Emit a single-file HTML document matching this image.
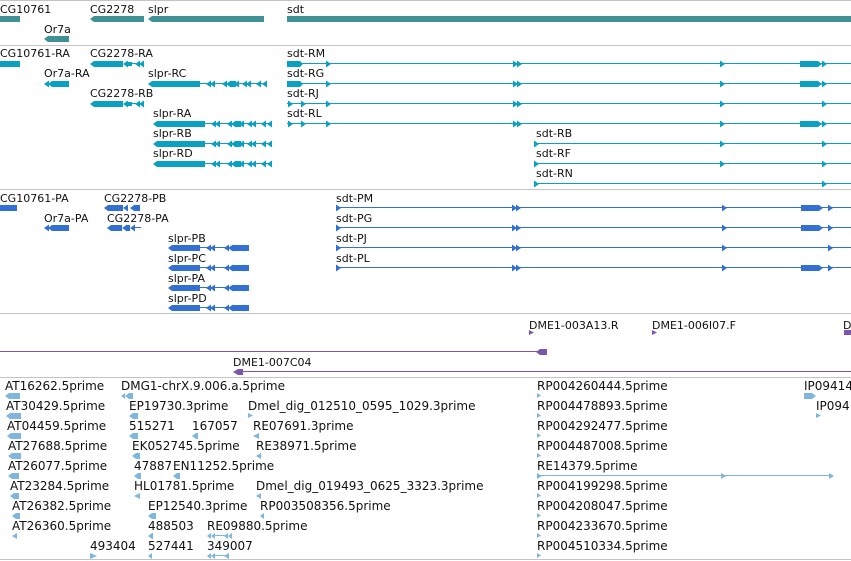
<!DOCTYPE html>
<html><head><meta charset="utf-8"><style>
html,body{margin:0;padding:0;background:#fff;width:851px;height:561px;overflow:hidden}
svg{display:block}
rect{shape-rendering:crispEdges}
text{font-family:"DejaVu Sans","Liberation Sans",sans-serif;font-size:11px;fill:#111}
.b text{font-size:12px}
</style></head><body>
<svg width="851" height="561" viewBox="0 0 851 561" xmlns="http://www.w3.org/2000/svg">
<defs>
<g id="slT"><polygon points="0,0 4,-3 52,-3 52,3 4,3"/><rect x="52" y="-1" width="67" height="1"/>
<polygon points="58,0 63,-3.5 63,3.5"/><polygon points="62,0 67,-3.5 67,3.5"/>
<polygon points="74,0 79,-3.5 79,3.5"/><polygon points="78,0 83,-3.5 83,3.5"/><rect x="82" y="-3" width="6" height="6"/><polygon points="86,0 91,-3.5 91,3.5"/>
<polygon points="94,0 99,-3.5 99,3.5"/><polygon points="98,0 103,-3.5 103,3.5"/><polygon points="108,0 113,-3.5 113,3.5"/><polygon points="114,0 119,-3.5 119,3.5"/></g>
<g id="slP"><polygon points="0,0 4,-3 32,-3 32,3 4,3"/><rect x="32" y="-1" width="49" height="1"/>
<polygon points="38,0 43,-3.5 43,3.5"/><polygon points="42,0 47,-3.5 47,3.5"/>
<polygon points="56,0 61,-3.5 61,3.5"/><polygon points="60,0 65,-3.5 65,3.5"/><rect x="64" y="-3" width="12" height="6"/><polygon points="72,0 77,-3.5 77,3.5"/><rect x="76" y="-3" width="5" height="6"/></g>
<g id="cgT"><polygon points="0,0 4,-3 33,-3 33,3 4,3"/><polygon points="33,0 38,-3.5 38,3.5"/><rect x="37" y="-2" width="5" height="4"/><rect x="38" y="-1" width="8" height="1"/><polygon points="45,0 50,-3.5 50,3.5"/><polygon points="49,0 54,-3.5 54,3.5"/></g>
<g id="ra"><polygon points="0,-3.5 5,0 0,3.5"/></g>
</defs>

<g fill="#c4c4c4"><rect x="0" y="0" width="851" height="1"/><rect x="0" y="45" width="851" height="1"/><rect x="0" y="189" width="851" height="1"/><rect x="0" y="313" width="851" height="1"/><rect x="0" y="377" width="851" height="1"/><rect x="0" y="559" width="851" height="1"/></g>

<text x="0" y="13">CG10761</text><text x="90" y="13">CG2278</text><text x="148" y="13">slpr</text><text x="287" y="13">sdt</text><text x="44" y="33">Or7a</text>
<g fill="#3f9196">
<rect x="0" y="16" width="20" height="6"/>
<polygon points="90,19 94,16 144,16 144,22 94,22"/>
<polygon points="148,19 152,16 264,16 264,22 152,22"/>
<rect x="287" y="16" width="564" height="6"/>
<polygon points="44,39 48,36 69,36 69,42 48,42"/>
</g>

<text x="0" y="57">CG10761-RA</text><text x="90" y="57">CG2278-RA</text><text x="44" y="77">Or7a-RA</text><text x="148" y="77">slpr-RC</text>
<text x="90" y="97">CG2278-RB</text><text x="153" y="117">slpr-RA</text><text x="153" y="137">slpr-RB</text><text x="153" y="157">slpr-RD</text>
<text x="287" y="57">sdt-RM</text><text x="287" y="77">sdt-RG</text><text x="287" y="97">sdt-RJ</text><text x="287" y="117">sdt-RL</text>
<text x="536" y="137">sdt-RB</text><text x="536" y="157">sdt-RF</text><text x="536" y="177">sdt-RN</text>
<g fill="#0aa0c2">
<rect x="0" y="61" width="20" height="6"/>
<use href="#cgT" x="90" y="64"/><use href="#cgT" x="90" y="104"/>
<polygon points="44,84 49,80.5 49,87.5"/><polygon points="48,84 52,81 69,81 69,87 52,87"/>
<use href="#slT" x="148" y="84"/><use href="#slT" x="153" y="124"/><use href="#slT" x="153" y="144"/><use href="#slT" x="153" y="164"/>
<rect x="287" y="63" width="564" height="1"/><rect x="287" y="83" width="564" height="1"/><rect x="287" y="103" width="564" height="1"/><rect x="287" y="123" width="564" height="1"/>
<rect x="534" y="143" width="317" height="1"/><rect x="534" y="163" width="317" height="1"/><rect x="534" y="183" width="317" height="1"/>
<polygon points="287,61 300,61 303,64 300,67 287,67"/><polygon points="287,81 300,81 303,84 300,87 287,87"/>
<use href="#ra" x="288" y="104"/><use href="#ra" x="301" y="104"/><use href="#ra" x="288" y="124"/><use href="#ra" x="301" y="124"/>
<use href="#ra" x="326" y="64"/><use href="#ra" x="326" y="84"/><use href="#ra" x="326" y="104"/><use href="#ra" x="326" y="124"/>
<use href="#ra" x="513" y="64"/><use href="#ra" x="517" y="64"/><use href="#ra" x="513" y="84"/><use href="#ra" x="517" y="84"/><use href="#ra" x="513" y="104"/><use href="#ra" x="517" y="104"/><use href="#ra" x="513" y="124"/><use href="#ra" x="517" y="124"/>
<use href="#ra" x="720" y="64"/><use href="#ra" x="720" y="84"/><use href="#ra" x="720" y="104"/><use href="#ra" x="720" y="124"/><use href="#ra" x="720" y="144"/><use href="#ra" x="720" y="164"/>
<polygon points="800,61 818,61 822,64 818,67 800,67"/><polygon points="800,81 818,81 822,84 818,87 800,87"/><polygon points="800,121 818,121 822,124 818,127 800,127"/>
<use href="#ra" x="822" y="64"/><use href="#ra" x="822" y="84"/><use href="#ra" x="822" y="104"/><use href="#ra" x="822" y="124"/><use href="#ra" x="822" y="144"/><use href="#ra" x="822" y="164"/><use href="#ra" x="822" y="184"/>
<use href="#ra" x="534" y="144"/><use href="#ra" x="534" y="164"/><use href="#ra" x="534" y="184"/>
</g>

<text x="0" y="202">CG10761-PA</text><text x="104" y="202">CG2278-PB</text><text x="44" y="222">Or7a-PA</text><text x="107" y="222">CG2278-PA</text>
<text x="168" y="242">slpr-PB</text><text x="168" y="262">slpr-PC</text><text x="168" y="282">slpr-PA</text><text x="168" y="302">slpr-PD</text>
<text x="336" y="202">sdt-PM</text><text x="336" y="222">sdt-PG</text><text x="336" y="242">sdt-PJ</text><text x="336" y="262">sdt-PL</text>
<g fill="#3370d3">
<rect x="0" y="205" width="17" height="6"/>
<polygon points="104,208 108,205 123,205 123,211 108,211"/><polygon points="123,208 128,204.5 128,211.5"/><polygon points="130,208 135,204.5 135,211.5"/><rect x="134" y="205" width="6" height="6"/>
<polygon points="44,228 49,224.5 49,231.5"/><polygon points="48,228 52,225 69,225 69,231 52,231"/>
<polygon points="107,228 111,225 122,225 122,231 111,231"/><polygon points="122,228 127,224.5 127,231.5"/><rect x="126" y="225" width="4" height="6"/><polygon points="130,228 135,224.5 135,231.5"/><rect x="134" y="227" width="7" height="1"/>
<use href="#slP" x="168" y="248"/><use href="#slP" x="168" y="268"/><use href="#slP" x="168" y="288"/><use href="#slP" x="168" y="308"/>
<rect x="336" y="207" width="515" height="1"/><rect x="336" y="227" width="515" height="1"/><rect x="336" y="247" width="515" height="1"/><rect x="336" y="267" width="515" height="1"/>
<use href="#ra" x="336" y="208"/><use href="#ra" x="336" y="228"/><use href="#ra" x="336" y="248"/><use href="#ra" x="336" y="268"/>
<use href="#ra" x="512" y="208"/><use href="#ra" x="516" y="208"/><use href="#ra" x="512" y="228"/><use href="#ra" x="516" y="228"/><use href="#ra" x="512" y="248"/><use href="#ra" x="516" y="248"/><use href="#ra" x="512" y="268"/><use href="#ra" x="516" y="268"/>
<use href="#ra" x="722" y="208"/><use href="#ra" x="722" y="228"/><use href="#ra" x="722" y="248"/><use href="#ra" x="722" y="268"/>
<polygon points="801,205 819,205 823,208 819,211 801,211"/><polygon points="801,225 819,225 823,228 819,231 801,231"/><polygon points="801,265 819,265 823,268 819,271 801,271"/>
<use href="#ra" x="828" y="208"/><use href="#ra" x="828" y="228"/><use href="#ra" x="828" y="248"/><use href="#ra" x="828" y="268"/>
</g>

<text x="529" y="329">DME1-003A13.R</text><text x="652" y="329">DME1-006I07.F</text><text x="843" y="329">D</text><text x="233" y="366">DME1-007C04</text>
<g fill="#7b55b0">
<polygon points="529,330 534,332.5 529,335"/><polygon points="652,330 657,332.5 652,335"/><rect x="844" y="330" width="7" height="5"/>
<rect x="0" y="351" width="540" height="1"/><polygon points="536,352 540,349 547,349 547,355 540,355"/>
<rect x="236" y="371" width="615" height="1"/><polygon points="233,372 238,369 243,369 243,375 238,375"/>
</g>

<g class="b">
<text x="5" y="390">AT16262.5prime</text><text x="121" y="390">DMG1-chrX.9.006.a.5prime</text><text x="537" y="390">RP004260444.5prime</text><text x="804" y="390">IP09414</text>
<text x="6" y="410">AT30429.5prime</text><text x="129" y="410">EP19730.3prime</text><text x="248" y="410">Dmel_dig_012510_0595_1029.3prime</text><text x="537" y="410">RP004478893.5prime</text><text x="816" y="410">IP094</text>
<text x="7" y="430">AT04459.5prime</text><text x="129" y="430">515271</text><text x="192" y="430">167057</text><text x="253" y="430">RE07691.3prime</text><text x="537" y="430">RP004292477.5prime</text>
<text x="8" y="450">AT27688.5prime</text><text x="132" y="450">EK052745.5prime</text><text x="256" y="450">RE38971.5prime</text><text x="537" y="450">RP004487008.5prime</text>
<text x="8" y="470">AT26077.5prime</text><text x="134" y="470">47887</text><text x="173" y="470">EN11252.5prime</text><text x="537" y="470">RE14379.5prime</text>
<text x="10" y="490">AT23284.5prime</text><text x="134" y="490">HL01781.5prime</text><text x="256" y="490">Dmel_dig_019493_0625_3323.3prime</text><text x="537" y="490">RP004199298.5prime</text>
<text x="12" y="510">AT26382.5prime</text><text x="148" y="510">EP12540.3prime</text><text x="260" y="510">RP003508356.5prime</text><text x="537" y="510">RP004208047.5prime</text>
<text x="12" y="530">AT26360.5prime</text><text x="148" y="530">488503</text><text x="207" y="530">RE09880.5prime</text><text x="537" y="530">RP004233670.5prime</text>
<text x="90" y="550">493404</text><text x="148" y="550">527441</text><text x="207" y="550">349007</text><text x="537" y="550">RP004510334.5prime</text>
</g>
<g fill="#7fb6df">
<polygon points="5,396 9,393 20,393 20,399 9,399"/><polygon points="121,396 125,393 125,399"/><polygon points="125,396 129,393 129,399"/><rect x="129" y="393" width="4" height="6"/>
<polygon points="537,393 541,395.5 537,398"/><polygon points="804,393 812,393 816,396 812,399 804,399"/>
<polygon points="6,416 10,413 21,413 21,419 10,419"/><polygon points="129,416 133,413 133,419"/><rect x="133" y="413" width="5" height="6"/><polygon points="248,413 253,415.5 248,418"/><polygon points="537,413 541,415.5 537,418"/><polygon points="816,413 821,415.5 816,418"/>
<polygon points="7,436 11,433 21,433 21,439 11,439"/><polygon points="129,436 133,433 133,439"/><rect x="133" y="433" width="5" height="6"/><polygon points="192,436 196,433 198,433 198,439 196,439"/><polygon points="253,436 259,433 259,439"/><polygon points="537,433 541,435.5 537,438"/>
<polygon points="8,456 12,453 21,453 21,459 12,459"/><polygon points="132,456 136,453 140,453 140,459 136,459"/><polygon points="256,456 261,453 261,459"/><polygon points="537,453 541,455.5 537,458"/>
<polygon points="8,476 12,473 19,473 19,479 12,479"/><polygon points="134,476 138,473 141,473 141,479 138,479"/><polygon points="173,476 177,473 180,473 180,479 177,479"/>
<rect x="537" y="475" width="296" height="1"/><polygon points="537,473 542,476 537,479"/><polygon points="721,473 726,476 721,479"/><polygon points="829,473 834,476 829,479"/>
<polygon points="10,496 14,493 19,493 19,499 14,499"/><polygon points="134,496 140,493 140,499"/><polygon points="256,496 261,493 261,499"/><polygon points="537,493 541,495.5 537,498"/>
<polygon points="12,516 16,513 20,513 20,519 16,519"/><polygon points="148,516 152,513 156,513 156,519 152,519"/><polygon points="260,516 264,513 264,519"/><polygon points="537,513 541,515.5 537,518"/>
<polygon points="12,536 17,533 17,539"/><polygon points="148,536 152,533 153,533 153,539 152,539"/><polygon points="207,536 211,533 211,539"/><polygon points="211,536 215,533 215,539"/><rect x="215" y="535" width="10" height="1"/><polygon points="224,536 228,533 228,539"/><polygon points="228,536 232,533 232,539"/><polygon points="537,533 541,535.5 537,538"/>
<polygon points="90,553 97,556 90,559"/><polygon points="148,556 152,553 152,559"/><polygon points="207,556 211,553 211,559"/><polygon points="211,556 215,553 215,559"/><rect x="215" y="555" width="10" height="1"/><polygon points="224,556 229,553 229,559"/><polygon points="537,553 541,555.5 537,558"/>
</g>
</svg>
</body></html>
